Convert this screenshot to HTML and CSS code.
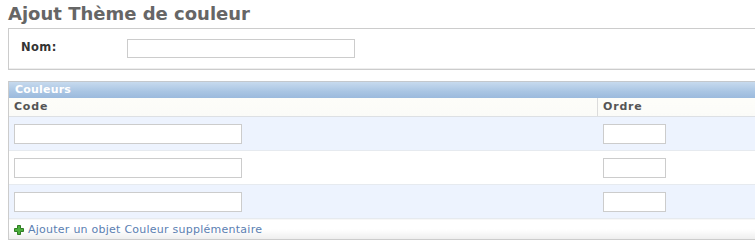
FILE: index.html
```html
<!DOCTYPE html>
<html lang="fr">
<head>
<meta charset="utf-8">
<title>Ajout Thème de couleur</title>
<link rel="stylesheet" href="styles.css">
</head>
<body>
<div class="content">
  <h1>Ajout Thème de couleur</h1>
  <fieldset class="module">
    <div class="form-row">
      <label for="id_nom">Nom:</label>
      <input id="id_nom" class="v-text" type="text" autofocus>
    </div>
  </fieldset>

  <div class="inline-group">
    <h2>Couleurs</h2>
    <table class="tabular">
      <thead>
        <tr><th class="col-code">Code</th><th class="col-ordre">Ordre</th></tr>
      </thead>
      <tbody>
        <tr class="row1"><td><input class="in-code" type="text"></td><td><input class="in-ordre" type="text"></td></tr>
        <tr class="row2"><td><input class="in-code" type="text"></td><td><input class="in-ordre" type="text"></td></tr>
        <tr class="row1"><td><input class="in-code" type="text"></td><td><input class="in-ordre" type="text"></td></tr>
        <tr class="add-row">
          <td colspan="2">
            <a class="add-link" href="#">
              <svg class="add-icon" width="10" height="10" viewBox="0 0 10 10" aria-hidden="true">
                <path d="M3.5 0.5h3v3h3v3h-3v3h-3v-3h-3v-3h3z" fill="#4caf3c" stroke="#2f7d23" stroke-width="1"/>
              </svg>Ajouter un objet Couleur supplémentaire
            </a>
          </td>
        </tr>
      </tbody>
    </table>
  </div>
</div>
</body>
</html>
```

FILE: styles.css
```css
html, body {
  margin: 0;
  padding: 0;
  background: #fff;
}

body {
  overflow: hidden;
  font-family: "DejaVu Sans", Verdana, sans-serif;
  font-size: 11px;
  color: #333;
}

.content {
  width: 820px;
  padding-left: 8px;
}

h1 {
  margin: 0 0 3px 0;
  padding-top: 3px;
  font-size: 18px;
  line-height: 22px;
  font-weight: bold;
  color: #666;
}

.module {
  margin: 0;
  padding: 0;
  min-width: 0;
  border: 1px solid #ccc;
  background: #fff;
}

.form-row {
  display: flex;
  align-items: flex-start;
  padding: 10px 12px 10px 12px;
  border-bottom: 1px solid #eee;
}

.form-row label {
  width: 106px;
  flex: none;
  font-weight: bold;
  font-size: 11.5px;
  letter-spacing: 0.4px;
  line-height: 13px;
  color: #333;
  padding-top: 2px;
}

.v-text {
  width: 228px;
  height: 19px;
  caret-color: #000;
}

input {
  box-sizing: border-box;
  margin: 0;
  padding: 1px 4px;
  border: 1px solid #ccc;
  background: #fff;
  font-family: "DejaVu Sans", Verdana, sans-serif;
  font-size: 11px;
  color: #000;
  outline: none;
}

input:focus {
  outline: none;
}

.inline-group {
  margin-top: 11px;
  border: 1px solid #ccc;
  border-top: 1px solid #c4c8cc;
}

.inline-group h2 {
  margin: 0;
  padding: 0 6px;
  height: 16px;
  line-height: 15px;
  font-size: 11px;
  font-weight: bold;
  letter-spacing: 0.2px;
  color: #fff;
  background: linear-gradient(#c7daee, #a9c5e3 60%, #9bbadd);
}

.tabular {
  width: 100%;
  border-collapse: collapse;
  border-spacing: 0;
}

.tabular th {
  text-align: left;
  font-size: 11px;
  font-weight: bold;
  letter-spacing: 0.8px;
  color: #555;
  height: 18px;
  padding: 0 5px;
  line-height: 18px;
  background: linear-gradient(#fdfdf9, #fbfbf8);
  border-bottom: 1px solid #dde0e4;
}

.tabular th.col-code {
  width: 578px;
}

.tabular th.col-ordre {
  border-left: 1px solid #dcdcdc;
}

.tabular td {
  padding: 7px 5px 6px 5px;
  border-bottom: 1px solid #e6eaef;
  vertical-align: top;
}

.row1 td {
  background: #edf3fe;
}

.row2 td {
  background: #fff;
}

.in-code {
  display: block;
  width: 228px;
  height: 20px;
}

.in-ordre {
  display: block;
  width: 63px;
  height: 20px;
}

.tabular .add-row td {
  padding: 4px 5px 3px 5px;
  height: 13px;
  border-bottom: none;
  background: linear-gradient(#fff, #fff 50%, #ededed);
}

.add-link {
  display: flex;
  align-items: center;
  gap: 4px;
  color: #5b80b2;
  text-decoration: none;
  font-size: 11px;
  letter-spacing: 0.25px;
  line-height: 13px;
}

.add-icon {
  flex: none;
  display: block;
}
```
